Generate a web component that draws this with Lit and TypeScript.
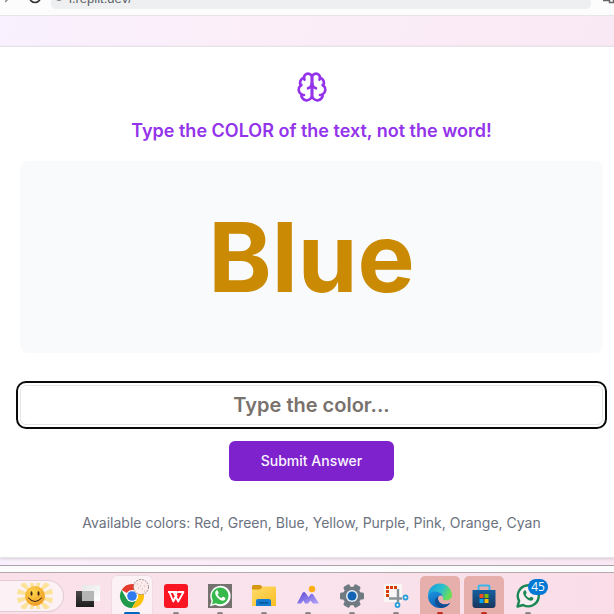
import { LitElement, html, css, svg, TemplateResult } from "lit";
import { customElement, state } from "lit/decorators.js";
import { classMap } from "lit/directives/class-map.js";

interface TaskItem {
  label: string;
  look: string;
  icon: TemplateResult;
  badge?: string;
}

const rays = Array.from({ length: 12 }, (_, i) => i * 30 + 15);

const sun = svg`
  <g fill="#fde083">
    ${rays.map((a) => svg`<path d="M19 14 L17.2 2 H22.8 L21 14Z" opacity=".8" transform="rotate(${a} 20 20)"/>`)}
  </g>
  <circle cx="20" cy="20" r="10" fill="url(#sunFill)"/>
  <ellipse cx="16.500" cy="17.500" rx="1" ry="2.200" fill="#3a2410"/>
  <ellipse cx="23.500" cy="17.500" rx="1" ry="2.200" fill="#3a2410"/>
  <path d="M13.500 22q6.500 7 13 0" fill="none" stroke="#3a2410" stroke-width="1.100" stroke-linecap="round"/>
  <defs><radialGradient id="sunFill" cx=".4" cy=".3" r=".75"><stop offset="0" stop-color="#ffd44d"/><stop offset="1" stop-color="#ee9a22"/></radialGradient></defs>`;

const items: TaskItem[] = [
  {
    label: "Task view", look: "idle",
    icon: svg`<defs><linearGradient id="tv" x2="0" y2="1"><stop stop-color="#4a4a4a"/><stop offset="1" stop-color="#1c1c1c"/></linearGradient>
      <linearGradient id="tw" x2="1" y2="1"><stop stop-color="#e6e6e6"/><stop offset="1" stop-color="#fff"/></linearGradient></defs>
      <path d="M0 7h18v16H0z" fill="url(#tv)"/><path d="M6 1h18v16H6z" fill="url(#tw)"/><path d="M6 7h12v10H6z" fill="#b5b5b5"/>`,
  },
  {
    label: "Chrome", look: "active",
    icon: svg`<circle cx="12" cy="12" r="12" fill="#fff"/>
      <path d="M12 12 1.6 6A12 12 0 0 1 22.4 6H12Z" fill="#e33b2e"/>
      <path d="M1.6 6A12 12 0 0 0 12 24l5.2-9L12 12 6.8 15Z" fill="#219b4b"/>
      <path d="M22.4 6A12 12 0 0 1 12 24l5.2-9A6 6 0 0 0 12 6Z" fill="#fdc10b"/>
      <circle cx="12" cy="12" r="6" fill="#fff"/><circle cx="12" cy="12" r="4.8" fill="#2f7bee"/>
      <circle cx="21" cy="3" r="7.5" fill="#fbecec" stroke="#8c7478" stroke-width=".8" stroke-dasharray="2 1"/>
      <path d="M17 0h1m3-1h1m2 3h1m-7 2h1m3 1h1m-3-3h1m3 5h1" stroke="#e0a4ac"/>`,
  },
  {
    label: "WPS Office", look: "open",
    icon: svg`<rect width="24" height="24" rx="3" fill="#fb1421"/>
      <path d="M4 8h9l-3.8 9.5L5.4 8M9.5 8l4.7 9.5L19.5 8H14M13 11l-3.8 6.5" fill="none" stroke="#fff" stroke-width="1.8" stroke-linejoin="round"/>`,
  },
  {
    label: "WhatsApp", look: "open",
    icon: svg`<path d="M0 0h24v24H0z" fill="#74716f"/>
      <path d="M2 22.2l1.5-5.4A10.2 10.2 0 1 1 7.4 20.8Z" fill="#fff"/>
      <path d="M4 20.2l1-3.8A8.4 8.4 0 1 1 8 19.2Z" fill="#35b94a"/>
      <path d="M8.3 6.6c.6-.5 1.3-.3 1.5.2l.8 2c.2.6-.8 1.2-.9 1.6.8 1.7 2 2.8 3.8 3.5.5-.1 1-1.3 1.6-1.1l2.1 1c.6.4 0 2-.8 2.5-3 1.9-9.2-3.3-9.2-7.2 0-1 .5-1.9 1.1-2.5Z" fill="#fff"/>`,
  },
  {
    label: "File Explorer", look: "open",
    icon: svg`<defs><linearGradient id="fe" x2="1" y2="1"><stop stop-color="#ffdc6b"/><stop offset="1" stop-color="#f9bd24"/></linearGradient></defs>
      <path d="M0 2.5Q0 1 1.5 1h7L11 3.500V8H0Z" fill="#d69812"/><path d="M0 5.500h8l3-3h11.500q1.500 0 1.500 1.500V22H0Z" fill="url(#fe)"/>
      <path d="M4 22v-5q0-2 2-2h11q2 0 2 2v5z" fill="#157bd0"/><path d="M7 18h9v1.500H7z" fill="#0a5595"/>`,
  },
  {
    label: "Photos", look: "open",
    icon: svg`<defs><linearGradient id="ph" x2="1" y2="1"><stop stop-color="#5a47d4"/><stop offset="1" stop-color="#b3a5fa"/></linearGradient></defs>
      <circle cx="16" cy="5" r="3.200" fill="#ffae13"/>
      <path d="M1 19.500 6.500 9q1.500-2 3 0l3 4 2-2.500q1.500-1.500 3 .5l5.500 8.500h-6l-2.500-3-2.500 3h-3l-1.500-3-2.500 3Z" fill="url(#ph)"/>`,
  },
  {
    label: "Settings", look: "open",
    icon: svg`<g fill="#707a82">${[0, 60, 120].map((a) => svg`<rect x="8.500" y="0" width="7" height="24" rx="1.500" transform="rotate(${a + 30} 12 12)"/>`)}<circle cx="12" cy="12" r="9.300"/></g>
      <circle cx="12" cy="12" r="6" fill="#e9eef2"/><circle cx="12" cy="12" r="4.500" fill="#1265b4"/>`,
  },
  {
    label: "Snipping Tool", look: "open",
    icon: svg`<rect y="0" width="18" height="18" rx="1" fill="#f9f7f6"/>
      <path d="M3.500 13V3.500H14" fill="none" stroke="#d83b01" stroke-width="3" stroke-dasharray="3 1"/>
      <path d="M14 5v13M5 14.500h13" stroke="#8a9299" stroke-width="2.400" fill="none"/>
      <circle cx="13.500" cy="21" r="2" fill="#fff" stroke="#2d9fda" stroke-width="1.800"/><circle cx="21.500" cy="13.500" r="2" fill="#fff" stroke="#2d9fda" stroke-width="1.800"/>`,
  },
  {
    label: "Edge", look: "alert",
    icon: svg`<defs><linearGradient id="eg" x2="1" y2=".4"><stop stop-color="#1696dd"/><stop offset=".6" stop-color="#2bbfce"/><stop offset="1" stop-color="#6bdd55"/></linearGradient>
      <linearGradient id="eb" x2=".4" y2="1"><stop stop-color="#1a96df"/><stop offset="1" stop-color="#0f5cb4"/></linearGradient></defs>
      <path d="M0 12A12 12 0 0 1 24 11c0 4-3.500 5.300-6.500 5.300-2.500-.2-3.300-1.300-2.500-2.800 0-3-2.500-5-6-5C5 8 1.500 9.500 0 12Z" fill="url(#eg)"/>
      <path d="M0 12C1 8.500 4 7 8 7.500c4 .5 6.500 2.500 7 5-1-1.500-3.500-1.500-4.500 0-1.800 3 1 7.800 6 8 2.500 0 4.200-.7 5.800-1.700A12 12 0 0 1 12 24 12 12 0 0 1 0 12Z" fill="url(#eb)"/>
      <path d="M10.500 12.500c-1.800 3 1 7.800 6 8 2.500 0 4.200-.7 5.800-1.700A12 12 0 0 1 13 24C5.500 22 5.500 14 10.500 12.500Z" fill="#124d91"/>`,
  },
  {
    label: "Microsoft Store", look: "alert",
    icon: svg`<defs><linearGradient id="ms" x2="0" y2="1"><stop stop-color="#155f9f"/><stop offset="1" stop-color="#18365e"/></linearGradient></defs>
      <path d="M6.500 7V3q0-1.500 1.500-1.500h8q1.500 0 1.500 1.500v4" fill="none" stroke="#38b6ef" stroke-width="2"/>
      <path d="M.5 6h23v15q0 3-3 3h-17q-3 0-3-3Z" fill="url(#ms)"/>
      <path d="M7.500 10h4v4h-4z" fill="#f25022"/><path d="M12.500 10h4v4h-4z" fill="#7fba00"/><path d="M7.500 15h4v4h-4z" fill="#00a4ef"/><path d="M12.500 15h4v4h-4z" fill="#ffb900"/>`,
  },
  {
    label: "WhatsApp Desktop", look: "open", badge: "45",
    icon: svg`<path d="M1.500 22.500l1.600-5.600A10.500 10.500 0 1 1 7.200 21Z" fill="#fbeef2" stroke="#1b8755" stroke-width="2.400" stroke-linejoin="round"/>
      <path d="M8.300 6.600c.6-.5 1.300-.3 1.500.2l.8 2c.2.6-.8 1.200-.9 1.600.8 1.700 2 2.800 3.800 3.500.5-.1 1-1.300 1.600-1.100l2.100 1c.6.4 0 2-.8 2.500-3 1.900-9.200-3.300-9.200-7.200 0-1 .5-1.900 1.100-2.500Z" fill="#1b8755"/>`,
  },
];

@customElement("browser-bar")
export class BrowserBar extends LitElement {
  static styles = css`
    :host { display: flex; align-items: flex-end; height: 16px; overflow: hidden; box-sizing: border-box;
      padding: 0 0 6px 5px; background: #fcfcfc; border-bottom: 1px solid #e9e4ea; font: 13px/20px "Liberation Sans", sans-serif; }
    button { width: 20px; height: 20px; padding: 0; border: 0; background: none; flex: none; }
    .reload { margin: 0 6px 0 0; }
    svg { display: block; }
    .address { display: flex; align-items: center; gap: 4px; flex: 1; min-width: 0; height: 20px; padding-left: 4px;
      background: #eeeff1; border-radius: 0 0 5px 5px; }
    input { flex: 1; min-width: 0; border: 0; padding: 0; background: none; color: #5f6368; font: inherit; outline: 0; }
    .side { margin-left: 3px; overflow: hidden; }
  `;
  render() {
    return html`
      <button aria-label="Forward"><svg width="20" height="20" viewBox="0 0 20 20"><path d="M0 13l5-5" stroke="#888" stroke-width="1.500"/></svg></button>
      <button class="reload" aria-label="Reload"><svg width="20" height="20" viewBox="0 0 20 20"><circle cx="10" cy="8" r="5.500" fill="none" stroke="#333" stroke-width="1.600"/></svg></button>
      <div class="address">
        <svg width="10" height="20" viewBox="0 0 10 20"><circle cx="4" cy="9" r="2.500" fill="none" stroke="#888" stroke-width="1.200"/></svg>
        <input aria-label="Address" value="i.replit.dev/" />
      </div>
      <button class="side" aria-label="Extensions"><svg width="20" height="20" viewBox="0 0 20 20"><path d="M9 11.500h6M15.500 8v5.500h4V8" fill="none" stroke="#666" stroke-width="1.500"/></svg></button>`;
  }
}

@customElement("color-game")
export class ColorGame extends LitElement {
  static styles = css`
    :host { display: block; background: #fff; border: solid #e5e3e8; border-width: 1px 0; box-shadow: 0 1px 3px #0002; padding: 24px 11px 24px 20px; }
    form, .intro { display: flex; flex-direction: column; align-items: center; }
    .intro { gap: 14px; margin-bottom: 16px; }
    svg { display: block; }
    h1 { margin: 0; font-size: 18px; line-height: 28px; font-weight: 600; color: #9333ea; }
    .word { padding: 48px 0; border-radius: 8px; background: #f9fafb; text-align: center; font-size: 96px; line-height: 96px; font-weight: 700; color: #ca8a04; }
    form { margin: 32px 0; gap: 16px; }
    input { box-sizing: border-box; width: 100%; height: 40px; padding: 8px 12px; border: 1px solid #e5e5e5; border-radius: 6px;
      background: #fff; outline: 2px solid #0a0a0a; outline-offset: 2px; text-align: center; font: 600 20px/28px Inter, sans-serif; color: #0a0a0a; }
    input::placeholder { color: #78716c; opacity: 1; }
    button { height: 40px; padding: 0 32px; border: 0; border-radius: 6px; background: #7e22ce; color: #faf5ff; font: 500 14px/20px Inter, sans-serif; }
    p { margin: 0; text-align: center; font-size: 14px; line-height: 20px; color: #6b7280; }
  `;
  @state() private answer = "";
  private colors = ["Red", "Green", "Blue", "Yellow", "Purple", "Pink", "Orange", "Cyan"];
  render() {
    return html`
      <div class="intro">
        <svg width="32" height="32" viewBox="0 0 24 24" fill="none" stroke="#9333ea" stroke-width="2" stroke-linecap="round" stroke-linejoin="round" aria-hidden="true">
          <path d="M12 5a3 3 0 1 0-5.997.125 4 4 0 0 0-2.526 5.770 4 4 0 0 0 .556 6.588A4 4 0 1 0 12 18Z"/>
          <path d="M12 5a3 3 0 1 1 5.997.125 4 4 0 0 1 2.526 5.770 4 4 0 0 1-.556 6.588A4 4 0 1 1 12 18Z"/>
          <path d="M15 13a4.500 4.500 0 0 1-3-4 4.500 4.500 0 0 1-3 4"/>
          <path d="M17.599 6.500a3 3 0 0 0 .399-1.375M6.003 5.125A3 3 0 0 0 6.401 6.500M3.477 10.896a4 4 0 0 1 .585-.396M19.938 10.500a4 4 0 0 1 .585.396M6 18a4 4 0 0 1-1.967-.516M19.967 17.484A4 4 0 0 1 18 18"/>
        </svg>
        <h1>Type the COLOR of the text, not the word!</h1>
      </div>
      <div class="word">Blue</div>
      <form @submit=${(e: Event) => e.preventDefault()}>
        <input aria-label="Color of the text" placeholder="Type the color..." .value=${this.answer}
          @input=${(e: Event) => (this.answer = (e.target as HTMLInputElement).value)} />
        <button type="submit">Submit Answer</button>
      </form>
      <p>Available colors: ${this.colors.join(", ")}</p>`;
  }
}

@customElement("task-bar")
export class TaskBar extends LitElement {
  static styles = css`
    :host { display: flex; align-items: flex-start; gap: 4px; height: 42px; overflow: hidden; box-sizing: border-box; padding-top: 3px;
      border-top: 1px solid #b5a8ae; background: linear-gradient(90deg, #fae0e9, #f9e3ec 50%, #fadde8); }
    button { padding: 0; border: 0; background: none; font: inherit; flex: none; }
    svg { display: block; overflow: visible; }
    .weather { box-sizing: border-box; width: 64px; height: 32px; margin: 4px 0 0 0; padding-left: 15px; display: flex; align-items: center;
      background: #fcf1f4; border: 1px solid #e3ccd4; border-left: 0; border-radius: 0 16px 16px 0; }
    .weather svg { overflow: hidden; }
    .task { position: relative; display: flex; flex-direction: column; align-items: center; gap: 4px; width: 40px; height: 44px; padding-top: 8px; border-radius: 5px; }
    .active { background: #fcf2f5; box-shadow: 0 0 0 1px #efdce3; }
    .alert { background: #e7afab; }
    .mark { width: 6px; height: 3px; border-radius: 2px; background: #8c858a; }
    .idle .mark { visibility: hidden; }
    .active .mark { width: 16px; background: #0067c0; }
    .alert .mark { background: #c42b1c; }
    .badge { position: absolute; top: 3px; right: 0; width: 20px; height: 16px; border-radius: 8px; background: #0078d4; color: #fff;
      font: 12px/16px "Open Sans", sans-serif; text-align: center; }
  `;
  render() {
    return html`
      <button class="weather" aria-label="Weather"><svg width="40" height="26" viewBox="0 7 40 26">${sun}</svg></button>
      ${items.map((t) => html`
        <button class=${classMap({ task: true, [t.look]: true })} aria-label=${t.label}>
          <svg width="24" height="24" viewBox="0 0 24 24" aria-hidden="true">${t.icon}</svg>
          <span class="mark"></span>
          ${t.badge ? html`<span class="badge">${t.badge}</span>` : ""}
        </button>`)}`;
  }
}

@customElement("app-root")
export class AppRoot extends LitElement {
  static styles = css`
    :host { display: block; font-family: Inter, sans-serif; }
    .page { padding: 30px 0 7px; background: linear-gradient(100deg, #f9f1ff, #fbeef8 35%, #f9e8f3); }
    .frame { height: 7px; box-sizing: border-box; border-top: 1px solid #aaa2aa; background: #fcfcfc; }
  `;
  render() {
    return html`
      <browser-bar></browser-bar>
      <main class="page"><color-game></color-game></main>
      <div class="frame"></div>
      <task-bar></task-bar>`;
  }
}
